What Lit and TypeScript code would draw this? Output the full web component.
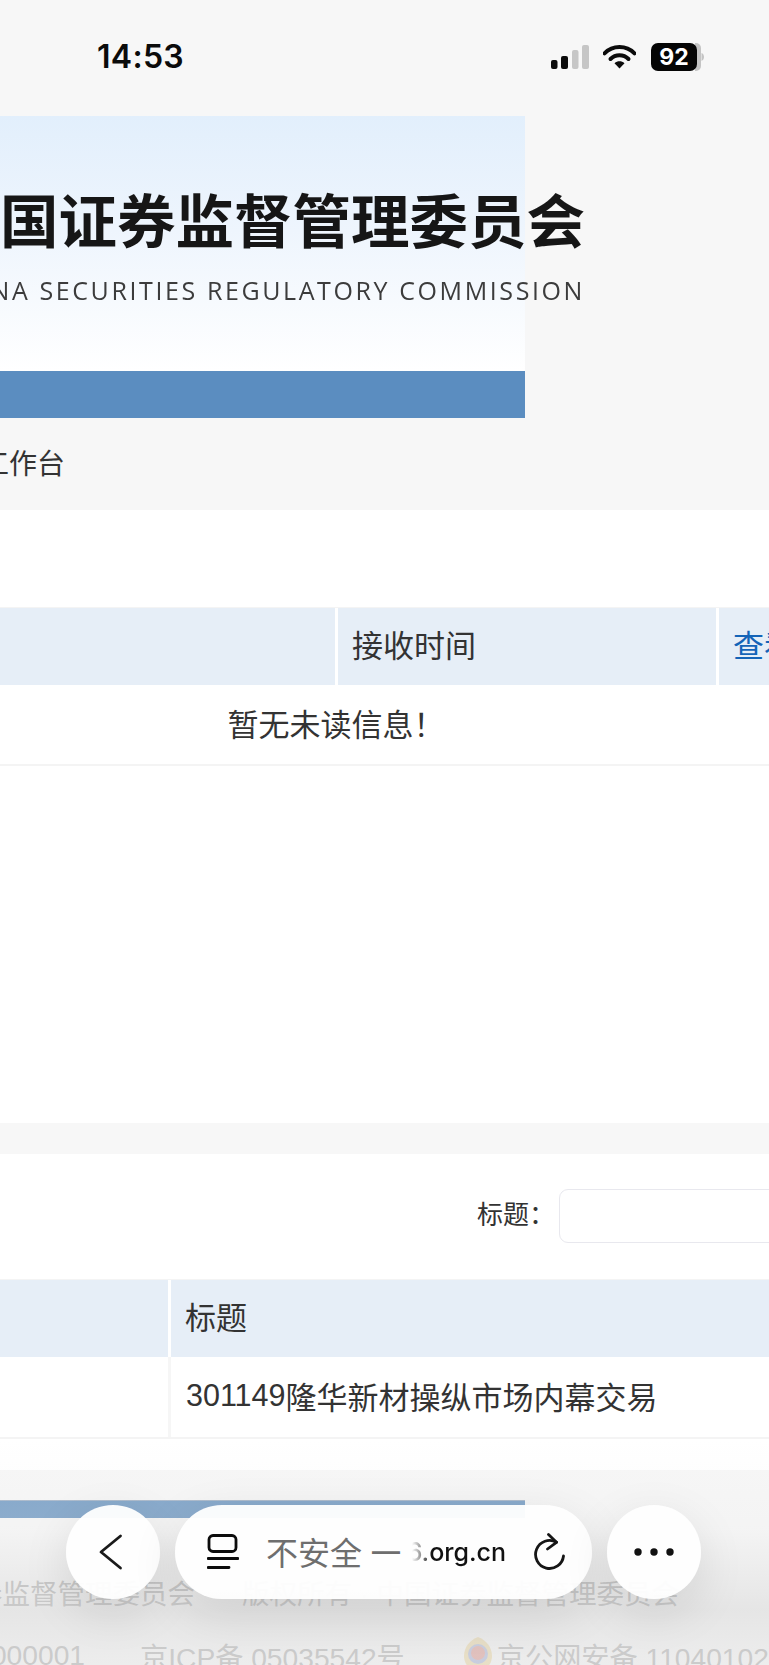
import { LitElement, html, css } from "lit";
import { customElement } from "lit/decorators.js";

@customElement("app-root")
export class AppRoot extends LitElement {
  static styles = css`
    :host {
      display: block;
      position: relative;
      width: 769px;
      height: 1665px;
      overflow: hidden;
      background: #f7f7f7;
      color: #333;
      font-family: "Helvetica Neue", "Liberation Sans", "Noto Sans CJK SC", sans-serif;
    }
    * { box-sizing: border-box; }
    .status {
      height: 116px;
      display: flex;
      align-items: flex-start;
      justify-content: space-between;
      padding: 39px 65px 0 97px;
    }
    .time {
      font-family: Inter, "Liberation Sans", sans-serif;
      font-size: 32px;
      line-height: 36px;
      font-weight: 600;
      letter-spacing: 0.3px;
      color: #0b0b0b;
    }
    .sys { display: flex; align-items: center; margin-top: 4px; }
    .sys svg { display: block; }
    .battery {
      position: relative;
      width: 53px;
      height: 28px;
      margin-left: 15px;
    }
    .battery svg { position: absolute; inset: 0; }
    .battery span {
      position: absolute;
      left: 0;
      width: 46px;
      top: 0;
      text-align: center;
      color: #fff;
      font: 700 23px/28px Inter, "Liberation Sans", sans-serif;
    }
    .banner {
      width: 525px;
      height: 302px;
      display: flex;
      flex-direction: column;
      background: linear-gradient(#e2effc 0%, #eef5fd 45%, #ffffff 100%);
      background-size: 100% 255px;
      background-repeat: no-repeat;
    }
    .brand {
      flex: 1;
      width: 645px;
      margin-left: -60px;
      padding-top: 68px;
      text-align: right;
      white-space: nowrap;
      filter: blur(0.5px);
    }
    .brand-cn {
      font: 700 58.500px/68px "Noto Sans CJK SC", sans-serif;
      color: #161616;
    }
    .brand-en {
      margin-top: 23px;
      font: 400 25px/30px "Open Sans", "Noto Sans", sans-serif;
      letter-spacing: 2.6px;
      color: #3c3c3c;
    }
    .stripe { height: 47px; background: #5b8dc0; flex: none; }
    .nav {
      height: 92px;
      width: 65px;
      padding-bottom: 4px;
      display: flex;
      justify-content: flex-end;
      align-items: center;
      white-space: nowrap;
      font-size: 28px;
      flex: none;
    }
    .panel { background: #fff; }
    .panel-a { height: 613px; padding-top: 97px; }
    .panel-b { height: 316px; margin-top: 31px; padding-top: 35px; }
    .row { display: grid; width: 800px; }
    .row-a { grid-template-columns: 335px 378px 85px; column-gap: 3px; }
    .row-b { grid-template-columns: 168px 629px; column-gap: 3px; }
    .head { height: 78px; background: #fff; border-top: 1px solid #f4f4f4; }
    .head > div {
      background: #e6eef7;
      display: flex;
      align-items: center;
      padding: 0 15px 6px 14px;
      font-size: 31px;
      height: 77px;
      white-space: nowrap;
    }
    .link { color: #1464b8; }
    .empty {
      width: 672px;
      height: 79px;
      padding-bottom: 4px;
      display: flex;
      align-items: center;
      justify-content: center;
      font-size: 31px;
    }
    .rule { height: 2px; background: #f4f4f4; width: 100%; }
    .filter {
      height: 54px;
      display: flex;
      align-items: center;
      padding-left: 477px;
      font-size: 26px;
      white-space: nowrap;
    }
    .filter span { padding-bottom: 7px; }
    .filter input {
      flex: none;
      width: 300px;
      height: 54px;
      margin-left: 4px;
      background: #fff;
      border: 1px solid #e8e8ee;
      border-radius: 9px;
      outline: none;
    }
    .mt { margin-top: 36px; }
    .body-b { height: 80px; background: #fff; }
    .body-b > div {
      display: flex;
      align-items: center;
      height: 80px;
      padding: 0 15px 4px;
      font-size: 31px;
      white-space: nowrap;
    }
    .digits { font-size: 30.500px; }
    .vsep { box-shadow: -3px 0 0 #f6f6f6; }
    .footer {
      padding-top: 30px;
      color: #b9b9b9;
      white-space: nowrap;
    }
    .foot-bar {
      width: 525px;
      height: 18px;
      background: #7fa4c9;
      border-top: 1px solid #a9b8ca;
    }
    .line { display: flex; align-items: center; height: 40px; }
    .line-1 { margin-top: 54px; font-size: 27.500px; }
    .line-2 { margin-top: 23px; font-size: 28.200px; }
    .clip-l { display: flex; justify-content: flex-end; flex: none; }
    .emblem { flex: none; display: block; margin-right: 2px; opacity: 0.55; }
    .glass {
      position: absolute;
      left: 0;
      right: 0;
      top: 1440px;
      bottom: 0;
      pointer-events: none;
      background: linear-gradient(rgba(235,235,235,0) 0, rgba(225,225,225,0.15) 90px, rgba(215,215,215,0.55) 170px, rgba(225,225,225,0.45) 225px);
    }
    .toolbar {
      position: absolute;
      left: 66px;
      top: 1505px;
      width: 635px;
      height: 94px;
      display: flex;
      gap: 15px;
    }
    .pill {
      height: 94px;
      background: rgba(254,254,254,0.96);
      box-shadow: 0 14px 48px rgba(0,0,0,0.1);
      display: flex;
      align-items: center;
      flex: none;
    }
    .round { width: 94px; border-radius: 50%; justify-content: center; }
    .url {
      width: 417px;
      border-radius: 47px;
      padding-left: 32px;
    }
    .url svg { flex: none; display: block; }
    .insecure {
      margin-left: 27px;
      width: 146px;
      padding-bottom: 3px;
      font: 400 32px/40px "Noto Sans CJK SC", sans-serif;
      color: #6e6e6e;
      white-space: nowrap;
      overflow: hidden;
      display: flex;
      align-items: center;
    }
    .dash {
      margin-left: 10px;
      font: 700 28px/40px "Liberation Sans", sans-serif;
    }
    .host {
      width: 94px;
      font: 500 25px/40px Inter, "Liberation Sans", sans-serif;
      color: #111;
      white-space: nowrap;
      display: flex;
      justify-content: flex-end;
      -webkit-mask-image: linear-gradient(90deg, transparent 0, #000 20px);
      mask-image: linear-gradient(90deg, transparent 0, #000 20px);
    }
    .reload { margin-left: 26px; }
  `;

  render() {
    return html`
      <div class="status">
        <div class="time">14:53</div>
        <div class="sys">
          <svg width="38" height="24" viewBox="0 0 38 24">
            <rect x="0" y="15" width="6.5" height="9" rx="2" fill="#0b0b0b"/>
            <rect x="10" y="11" width="7" height="13" rx="2" fill="#0b0b0b"/>
            <rect x="21" y="5" width="6.5" height="19" rx="2" fill="#c6c6c6"/>
            <rect x="31" y="0" width="7" height="24" rx="2" fill="#c6c6c6"/>
          </svg>
          <svg style="margin-left:14px" width="33" height="24" viewBox="0 0 33 24">
            <path d="M1.500 8.300C9.800 0 23.200 0 31.500 8.300" fill="none" stroke="#0b0b0b" stroke-width="4" stroke-linecap="round"/>
            <path d="M7.500 14C12.500 9 20.500 9 25.500 14" fill="none" stroke="#0b0b0b" stroke-width="4" stroke-linecap="round"/>
            <path d="M11.500 18.200C14.500 15.600 18.500 15.600 21.500 18.200L16.500 23.500Z" fill="#0b0b0b"/>
          </svg>
          <div class="battery">
            <svg width="53" height="28" viewBox="0 0 53 28">
              <path d="M44 0h1a5 5 0 0 1 5 5v18a5 5 0 0 1-5 5h-1z" fill="#c4c4c4"/>
              <path d="M50.500 10c1.600.6 2.500 2.200 2.500 4s-.9 3.400-2.500 4z" fill="#c4c4c4"/>
              <rect x="0" y="0" width="46" height="28" rx="7" fill="#050505"/>
            </svg>
            <span>92</span>
          </div>
        </div>
      </div>

      <div class="banner">
        <div class="brand">
          <div class="brand-cn">中国证券监督管理委员会</div>
          <div class="brand-en">CHINA SECURITIES REGULATORY COMMISSION</div>
        </div>
        <div class="stripe"></div>
      </div>
      <div class="nav"><span>我的工作台</span></div>

      <div class="panel panel-a">
        <div class="row row-a head">
          <div></div>
          <div>接收时间</div>
          <div class="link">查看</div>
        </div>
        <div class="empty">暂无未读信息！</div>
        <div class="rule"></div>
      </div>

      <div class="panel panel-b">
        <div class="filter"><span>标题：</span><input type="text" /></div>
        <div class="row row-b head mt">
          <div></div>
          <div>标题</div>
        </div>
        <div class="row row-b body-b">
          <div></div>
          <div class="vsep"><span class="digits">301149</span>隆华新材操纵市场内幕交易</div>
        </div>
        <div class="rule"></div>
      </div>

      <div class="footer">
        <div class="foot-bar"></div>
        <div class="line line-1">
          <div class="clip-l" style="width:195px"><span>中国证券监督管理委员会</span></div>
          <span style="margin-left:47px">版权所有 · 中国证券监督管理委员会</span>
        </div>
        <div class="line line-2">
          <div class="clip-l" style="width:85px"><span>bm56000001</span></div>
          <span style="margin-left:55px">京ICP备 05035542号</span>
          <svg class="emblem" style="margin-left:56px" width="34" height="38" viewBox="0 0 34 38">
            <path d="M17 1c8 3 14 10 14 19 0 8-6 15-14 17C9 35 3 28 3 20 3 11 9 4 17 1z" fill="#e8c877"/>
            <circle cx="17" cy="18" r="10" fill="#7f8fc9"/>
            <circle cx="17" cy="17" r="7" fill="#d2645a"/>
          </svg>
          <span>京公网安备 11040102700</span>
        </div>
      </div>

      <div class="glass"></div>
      <div class="toolbar">
        <div class="pill round">
          <svg width="30" height="42" viewBox="0 0 30 42">
            <path d="M22.500 5 3 21 22.500 37" fill="none" stroke="#1a1a1a" stroke-width="2.800" stroke-linecap="round" stroke-linejoin="round"/>
          </svg>
        </div>
        <div class="pill url">
          <svg width="32" height="38" viewBox="0 0 32 38">
            <rect x="2" y="2.500" width="27" height="16" rx="4" fill="none" stroke="#0c0c0c" stroke-width="2.800"/>
            <path d="M1 25.500h30M1 34.500h21" stroke="#0c0c0c" stroke-width="2.800" stroke-linecap="round"/>
          </svg>
          <div class="insecure"><span>不安全</span><span class="dash">—</span></div>
          <div class="host"><span>6.org.cn</span></div>
          <svg class="reload" width="34" height="38" viewBox="0 0 34 38">
            <path d="M24.500 9.300A14 14 0 1 0 31.500 23" fill="none" stroke="#161616" stroke-width="2.800" stroke-linecap="round"/>
            <path d="M16.500 1.500 24.500 9.300 15.500 16" fill="none" stroke="#161616" stroke-width="2.800" stroke-linecap="round" stroke-linejoin="round"/>
          </svg>
        </div>
        <div class="pill round">
          <svg width="40" height="10" viewBox="0 0 40 10">
            <circle cx="4" cy="5" r="3.700" fill="#111"/>
            <circle cx="20" cy="5" r="3.700" fill="#111"/>
            <circle cx="36" cy="5" r="3.700" fill="#111"/>
          </svg>
        </div>
      </div>
    `;
  }
}
